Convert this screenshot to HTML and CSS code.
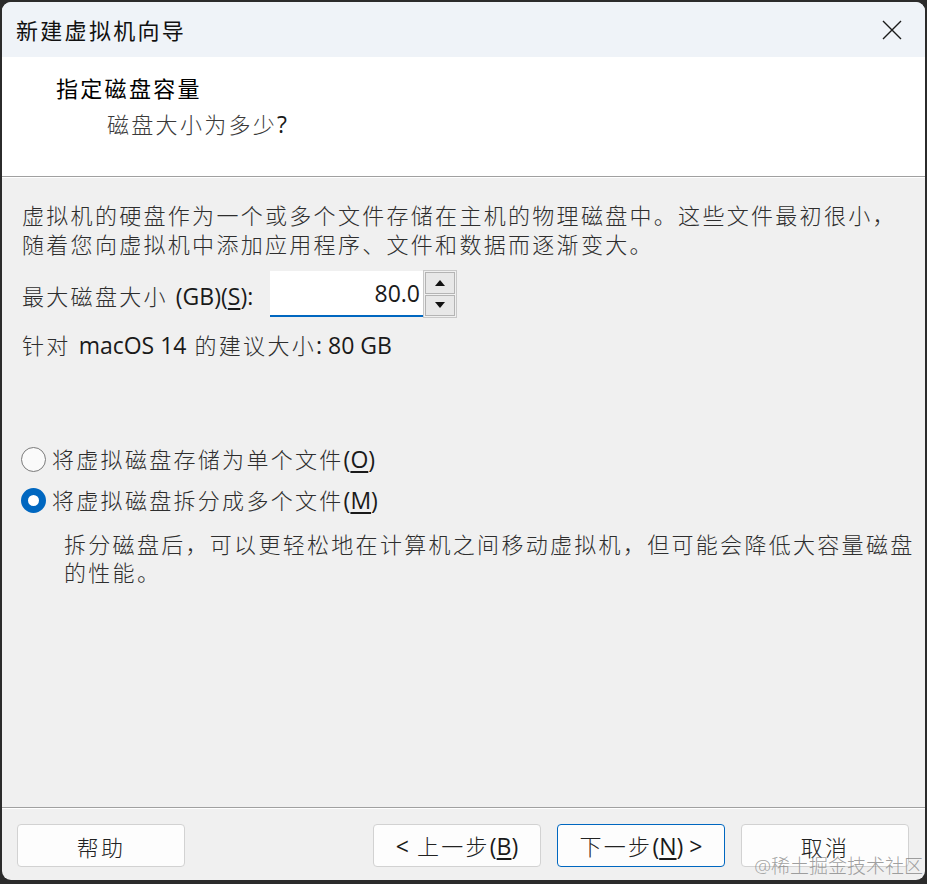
FILE: index.html
```html
<!DOCTYPE html>
<html lang="zh-CN">
<head>
<meta charset="utf-8">
<title>新建虚拟机向导</title>
<link rel="stylesheet" href="styles.css">
</head>
<body>
<div class="window">
  <div class="titlebar">
    <span class="title">新建虚拟机向导</span>
    <svg class="close" width="20" height="20" viewBox="0 0 20 20"><path d="M1 1L19 19M19 1L1 19" stroke="#1a1a1a" stroke-width="1.4" fill="none"/></svg>
  </div>
  <div class="header">
    <div class="h-title">指定磁盘容量</div>
    <div class="h-sub">磁盘大小为多少<span class="en">?</span></div>
  </div>
  <div class="sep"></div>
  <div class="content">
    <p class="para">虚拟机的硬盘作为一个或多个文件存储在主机的物理磁盘中。这些文件最初很小，<br>随着您向虚拟机中添加应用程序、文件和数据而逐渐变大。</p>
    <div class="size-row">
      <span class="label">最大磁盘大小 <span class="en">(GB)(<u>S</u>):</span></span>
      <div class="spin">
        <div class="field"><span class="en">80.0</span></div>
        <div class="arrows">
          <div class="arrow"><svg width="10" height="6" viewBox="0 0 10 6"><path d="M5 0L10 6H0Z" fill="#111"/></svg></div>
          <div class="arrow"><svg width="10" height="6" viewBox="0 0 10 6"><path d="M0 0H10L5 6Z" fill="#111"/></svg></div>
        </div>
      </div>
    </div>
    <p class="rec">针对 <span class="en">macOS 14</span> 的建议大小<span class="en">: 80 GB</span></p>
    <div class="radio-row first">
      <span class="radio"></span>
      <span class="rlabel">将虚拟磁盘存储为单个文件<span class="en">(<u>O</u>)</span></span>
    </div>
    <div class="radio-row second">
      <span class="radio checked"></span>
      <span class="rlabel">将虚拟磁盘拆分成多个文件<span class="en">(<u>M</u>)</span></span>
    </div>
    <p class="desc">拆分磁盘后，可以更轻松地在计算机之间移动虚拟机，但可能会降低大容量磁盘<br>的性能。</p>
  </div>
  <div class="footer">
    <button class="btn"><span>帮助</span></button>
    <div class="spacer"></div>
    <button class="btn"><span><span class="en">&lt;</span> 上一步<span class="en">(<u>B</u>)</span></span></button>
    <button class="btn primary"><span>下一步<span class="en">(<u>N</u>) &gt;</span></span></button>
    <button class="btn"><span>取消</span></button>
  </div>
  <div class="watermark">@稀土掘金技术社区</div>
</div>
</body>
</html>
```
FILE: styles.css
```css
* { box-sizing: border-box; }
html, body { margin: 0; padding: 0; }
body {
  background: #2b2b2b;
  width: 927px;
  height: 884px;
  overflow: hidden;
  font-family: "Open Sans", "Noto Sans CJK SC", sans-serif;
  font-size: 22px;
  letter-spacing: 2.3px;
  color: #2e2e2e;
  font-weight: 300;
}
.en { letter-spacing: 0; font-size: 23px; font-weight: 400; color: #1a1a1a; }
u { text-underline-offset: 3px; text-decoration-thickness: 1.5px; }
.window {
  position: relative;
  margin: 2px;
  width: 923px;
  height: 878px;
  border-radius: 9px;
  overflow: hidden;
  background: #f0f0f0;
  display: flex;
  flex-direction: column;
}
.titlebar {
  height: 55px;
  background: #eff3f8;
  display: flex;
  align-items: center;
  justify-content: space-between;
  padding: 0 23px 0 14px;
}
.title { color: #111; line-height: 30px; font-weight: 400; }
.close { display: block; }
.header {
  height: 119px;
  background: #fff;
  padding: 16px 0 0 54px;
}
.h-title { line-height: 30px; color: #000; font-weight: 400; }
.h-sub { line-height: 30px; margin: 6px 0 0 51px; color: #3a3a3a; }
.sep {
  height: 2px;
  border-top: 1px solid #a0a0a0;
  border-bottom: 1px solid #fff;
}
.content {
  flex: 1;
  padding: 23px 0 0 20px;
}
.para { margin: 0; line-height: 29px; white-space: nowrap; }
.size-row {
  display: flex;
  align-items: center;
  margin-top: 12px;
  height: 46px;
}
.label { line-height: 29px; padding-top: 5px; width: 248px; }
.spin { display: flex; align-items: stretch; height: 46px; }
.field {
  width: 153px;
  background: #fff;
  border-bottom: 2px solid #0067c0;
  text-align: right;
  padding: 4px 3px 0 0;
  color: #111;
  line-height: 36px;
}
.arrows {
  width: 34px;
  border: 1px solid #c8c8c8;
  padding: 1px;
  display: flex;
  flex-direction: column;
  gap: 1px;
  margin-top: -1px;
  margin-bottom: -1px;
}
.arrow {
  flex: 1;
  background: #e8e8e8;
  border: 1px solid #b4b4b4;
  display: flex;
  align-items: center;
  justify-content: center;
}
.arrow svg { display: block; }
.rec { margin: 14px 0 0 0; line-height: 29px; }
.radio-row {
  display: flex;
  align-items: center;
  height: 29px;
  gap: 6px;
}
.radio-row.first { margin-top: 85px; }
.radio-row.second { margin-top: 12px; }
.radio {
  width: 25px;
  height: 25px;
  border-radius: 50%;
  border: 1.5px solid #7a7a7a;
  background: #fafafa;
  margin-left: -1px;
}
.radio.checked {
  background: #fff;
  border: 7.5px solid #0067c0;
}
.rlabel { line-height: 29px; }
.desc { margin: 15px 0 0 42px; line-height: 28px; white-space: nowrap; }
.footer {
  height: 73px;
  border-top: 1px solid #a0a0a0;
  box-shadow: inset 0 1px 0 #fff;
  display: flex;
  gap: 16px;
  padding: 16px 16px 0 15px;
}
.spacer { flex: 1; }
.btn {
  width: 168px;
  height: 43px;
  background: #fdfdfd;
  border: 1px solid #d2d2d2;
  border-radius: 4px;
  font-family: inherit;
  font-size: 22px;
  font-weight: 300;
  letter-spacing: 2.3px;
  color: #222;
  padding: 0;
  display: flex;
  align-items: center;
  justify-content: center;
}
.btn.primary { border-color: #0067c0; }
.watermark {
  position: absolute;
  right: 2px;
  bottom: 1px;
  font-size: 19px;
  letter-spacing: 0;
  color: rgba(130, 130, 130, 0.75);
  line-height: 26px;
}
```
